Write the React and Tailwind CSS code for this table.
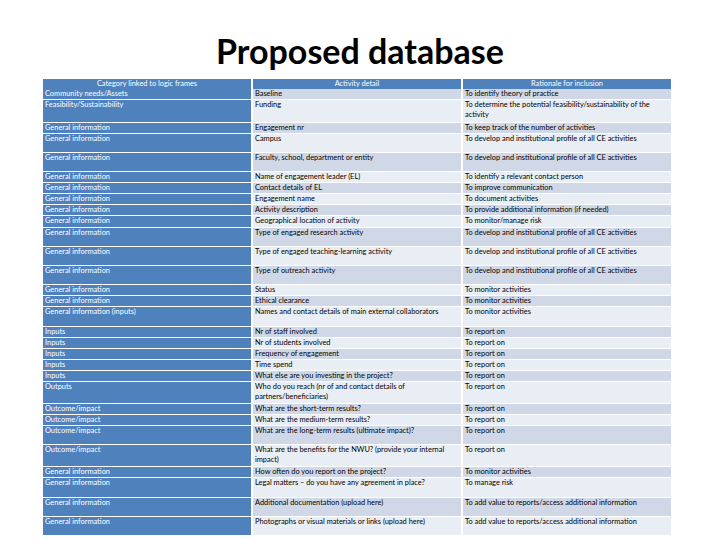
import React from "react";

// h: t = tall single line, d = two lines, default = single
const rows = [
  { cat: "Community needs/Assets", detail: "Baseline", why: "To identify theory of practice" },
  {
    cat: "Feasibility/Sustainability",
    detail: "Funding",
    why: ["To determine the potential feasibility/sustainability of the", "activity"],
    h: "d2",
  },
  { cat: "General information", detail: "Engagement nr", why: "To keep track of the number of activities" },
  { cat: "General information", detail: "Campus", why: "To develop and institutional profile of all CE activities", h: "t" },
  { cat: "General information", detail: "Faculty, school, department or entity", why: "To develop and institutional profile of all CE activities", h: "t" },
  { cat: "General information", detail: "Name of engagement leader (EL)", why: "To identify a relevant contact person" },
  { cat: "General information", detail: "Contact details of EL", why: "To improve communication" },
  { cat: "General information", detail: "Engagement name", why: "To document activities" },
  { cat: "General information", detail: "Activity description", why: "To provide additional information (if needed)" },
  { cat: "General information", detail: "Geographical location of activity", why: "To monitor/manage risk", h: "s2" },
  { cat: "General information", detail: "Type of engaged research activity", why: "To develop and institutional profile of all CE activities", h: "t" },
  { cat: "General information", detail: "Type of engaged teaching-learning activity", why: "To develop and institutional profile of all CE activities", h: "t" },
  { cat: "General information", detail: "Type of outreach activity", why: "To develop and institutional profile of all CE activities", h: "t" },
  { cat: "General information", detail: "Status", why: "To monitor activities" },
  { cat: "General information", detail: "Ethical clearance", why: "To monitor activities" },
  { cat: "General information (inputs)", detail: "Names and contact details of main external collaborators", why: "To monitor activities", h: "t2" },
  { cat: "Inputs", detail: "Nr of staff involved", why: "To report on" },
  { cat: "Inputs", detail: "Nr of students involved", why: "To report on" },
  { cat: "Inputs", detail: "Frequency of engagement", why: "To report on" },
  { cat: "Inputs", detail: "Time spend", why: "To report on" },
  { cat: "Inputs", detail: "What else are you investing in the project?", why: "To report on" },
  {
    cat: "Outputs",
    detail: ["Who do you reach (nr of and contact details of", "partners/beneficiaries)"],
    why: "To report on",
    h: "d",
  },
  { cat: "Outcome/impact", detail: "What are the short-term results?", why: "To report on" },
  { cat: "Outcome/impact", detail: "What are the medium-term results?", why: "To report on" },
  { cat: "Outcome/impact", detail: "What are the long-term results (ultimate impact)?", why: "To report on", h: "t" },
  {
    cat: "Outcome/impact",
    detail: ["What are the benefits for the NWU? (provide your internal", "impact)"],
    why: "To report on",
    h: "d",
  },
  { cat: "General information", detail: "How often do you report on the project?", why: "To monitor activities" },
  { cat: "General information", detail: "Legal matters – do you have any agreement in place?", why: "To manage risk", h: "t2" },
  { cat: "General information", detail: "Additional documentation (upload here)", why: "To add value to reports/access additional information", h: "t" },
  { cat: "General information", detail: "Photographs or visual materials or links (upload here)", why: "To add value to reports/access additional information", h: "t" },
];

function Lines({ text }) {
  if (Array.isArray(text)) {
    return text.map((t, i) => <div key={i}>{t}</div>);
  }
  return <div>{text}</div>;
}

function rowHeight(h) {
  if (h === "d") return "h-[21px]";
  if (h === "d2") return "h-[22px]";
  if (h === "t") return "h-[18px]";
  if (h === "t2") return "h-[19px]";
  if (h === "s2") return "h-[11px]";
  return "h-[10px]";
}

export default function App() {
  return (
    <div className="w-[720px] h-[540px] bg-white overflow-hidden" style={{ fontFamily: "Lato, 'Open Sans', sans-serif" }}>
      <h1 className="pt-[31px] h-[71px] text-center text-[34px] leading-[40px] font-bold text-black">Proposed database</h1>
      <div className="mt-[8px] ml-[43px] w-[628px] flex flex-col gap-y-[1px] text-[7.4px] leading-[10px]">
        <div className="grid grid-cols-3 gap-x-[2px] h-[9px] text-white text-center">
          <div className="bg-[#4f81bd]">Category linked to logic frames</div>
          <div className="bg-[#4f81bd]">Activity detail</div>
          <div className="bg-[#4f81bd]">Rationale for inclusion</div>
        </div>
        {rows.map((r, i) => {
          const shade = i % 2 === 0 ? "bg-[#d0d8e8]" : "bg-[#e9edf4]";
          return (
            <div key={i} className={`grid grid-cols-3 gap-x-[2px] ${rowHeight(r.h)}`}>
              <div className="bg-[#4f81bd] text-white px-[2px]">
                <Lines text={r.cat} />
              </div>
              <div className={`${shade} text-black px-[2px]`}>
                <Lines text={r.detail} />
              </div>
              <div className={`${shade} text-black px-[2px]`}>
                <Lines text={r.why} />
              </div>
            </div>
          );
        })}
      </div>
    </div>
  );
}
